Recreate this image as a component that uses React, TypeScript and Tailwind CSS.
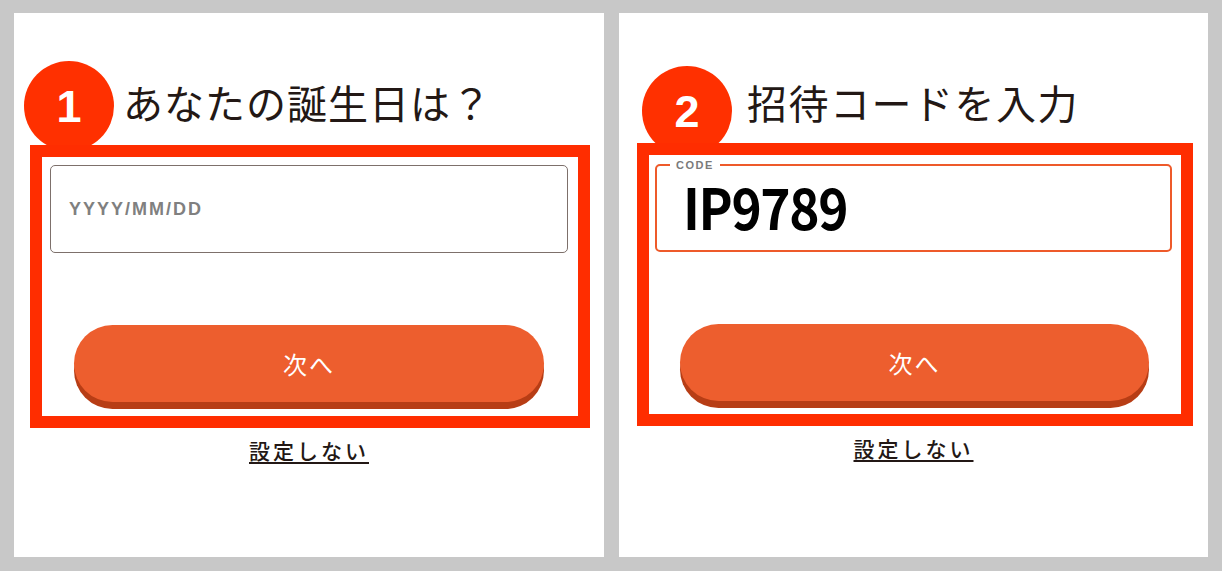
import type { ReactNode } from "react";

const jp = "font-['Noto_Sans_CJK_JP','Noto_Sans',sans-serif]";

function StepBadge({ n }: { n: string }) {
  return (
    <div className="flex h-[90px] w-[90px] shrink-0 items-center justify-center rounded-full bg-[#ff3000]">
      <span className="font-['Liberation_Sans',Arial,sans-serif] text-[45px] font-bold leading-none text-white">
        {n}
      </span>
    </div>
  );
}

function NextButton({ className }: { className: string }) {
  return (
    <button
      className={`${className} flex h-[77px] items-center justify-center rounded-full bg-[#ed5e2e] shadow-[0_7px_0_#b73d15] ${jp} text-[24px] tracking-[2px] text-white`}
    >
      次へ
    </button>
  );
}

function SkipLink({ children }: { children: ReactNode }) {
  return (
    <div className="mt-[9px] flex justify-center">
      <a
        href="#"
        className={`${jp} text-[21px] font-medium leading-[26px] tracking-[3px] text-[#231815] underline decoration-[1.5px] underline-offset-[3px]`}
      >
        {children}
      </a>
    </div>
  );
}

export default function App() {
  return (
    <div className="flex h-[571px] w-[1222px] gap-[15px] bg-[#c8c8c8] px-[14px] pt-[13px]">
      {/* Step 1: birthday */}
      <section className="h-[544px] w-[590px] bg-white">
        <div className="flex h-[132px] items-start">
          <div className="ml-[10px] mt-[48px]">
            <StepBadge n="1" />
          </div>
          <h2 className={`ml-[9px] mt-[67px] ${jp} text-[40px] leading-[44px] tracking-[1px] text-[#231815]`}>
            あなたの誕生日は？
          </h2>
        </div>
        <div className="relative z-10 ml-[16px] h-[283px] w-[560px] border-[12px] border-[#ff2d00] bg-white">
          <div className="ml-[8px] mt-[8px] flex h-[88px] w-[518px] items-center rounded-[5px] border border-[#7d706b] pl-[18px]">
            <span className="font-['Liberation_Sans',Arial,sans-serif] text-[18px] font-bold tracking-[2px] text-[#808080]">
              YYYY/MM/DD
            </span>
          </div>
          <NextButton className="ml-[32px] mt-[72px] w-[470px]" />
        </div>
        <SkipLink>設定しない</SkipLink>
      </section>

      {/* Step 2: invite code */}
      <section className="h-[544px] w-[589px] bg-white">
        <div className="flex h-[130px] items-start">
          <div className="ml-[23px] mt-[53px]">
            <StepBadge n="2" />
          </div>
          <h2 className={`ml-[15px] mt-[67px] ${jp} text-[40px] leading-[44px] tracking-[1.5px] text-[#231815]`}>
            招待コードを入力
          </h2>
        </div>
        <div className="relative z-10 ml-[18px] h-[283px] w-[556px] border-[12px] border-[#ff2d00] bg-white">
          <div className="relative ml-[6px] mt-[9px] h-[88px] w-[517px] rounded-[5px] border-2 border-[#ee5a2a] pl-[26px] pt-[14px]">
            <span className="absolute left-[13px] top-[-9px] bg-white px-[6px] font-['Liberation_Sans',Arial,sans-serif] text-[11px] font-bold leading-[16px] tracking-[1.5px] text-[#7a7a7a]">
              CODE
            </span>
            <span
              className={`${jp} inline-block origin-left scale-x-[0.9] text-[57px] font-bold leading-[50px] tracking-[-1.5px] text-black`}
            >
              IP9789
            </span>
          </div>
          <NextButton className="ml-[31px] mt-[72px] w-[469px]" />
        </div>
        <SkipLink>設定しない</SkipLink>
      </section>
    </div>
  );
}
